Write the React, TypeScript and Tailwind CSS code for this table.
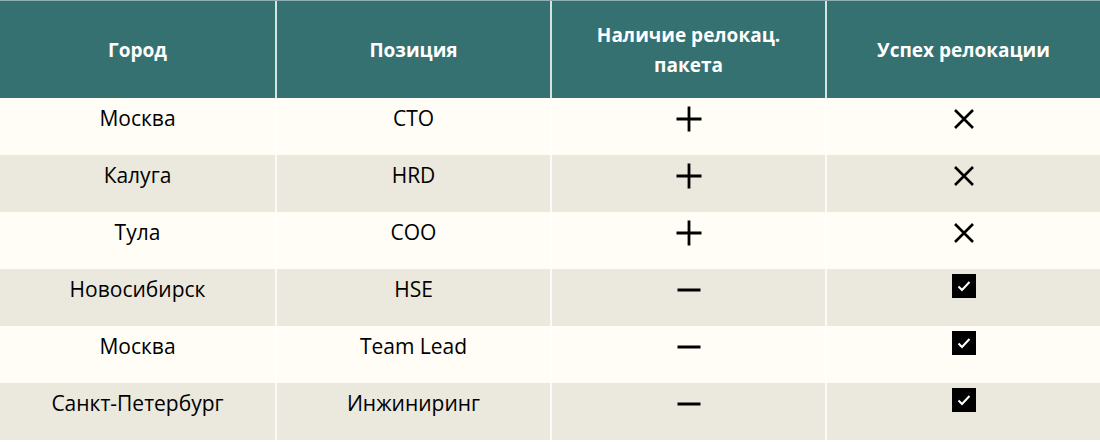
import type { ReactNode } from 'react'

type Mark = 'plus' | 'minus' | 'cross' | 'check'

const rows: { city: string; role: string; pack: Mark; ok: Mark }[] = [
  { city: 'Москва', role: 'CTO', pack: 'plus', ok: 'cross' },
  { city: 'Калуга', role: 'HRD', pack: 'plus', ok: 'cross' },
  { city: 'Тула', role: 'COO', pack: 'plus', ok: 'cross' },
  { city: 'Новосибирск', role: 'HSE', pack: 'minus', ok: 'check' },
  { city: 'Москва', role: 'Team Lead', pack: 'minus', ok: 'check' },
  { city: 'Санкт-Петербург', role: 'Инжиниринг', pack: 'minus', ok: 'check' },
]

function Icon({ mark }: { mark: Mark }) {
  if (mark === 'check') {
    return (
      <svg width="24" height="24" viewBox="0 0 24 24" className="mt-[5px]">
        <rect width="24" height="24" fill="#000" />
        <path d="M6.5 12.5l3.5 3.5 7.5-8" fill="none" stroke="#fff" strokeWidth="2" />
      </svg>
    )
  }
  return (
    <svg width="28" height="28" viewBox="0 0 28 28" className="mt-[7px]">
      {mark === 'plus' && <path d="M14 1.5v25M1.5 14h25" stroke="#000" strokeWidth="2.8" />}
      {mark === 'minus' && <path d="M2.5 14h23" stroke="#000" strokeWidth="3" />}
      {mark === 'cross' && <path d="M5 5l18 18M23 5L5 23" stroke="#000" strokeWidth="2.6" />}
    </svg>
  )
}

function Cell({ children, first }: { children: ReactNode; first?: boolean }) {
  return (
    <div className={`flex justify-center ${first ? '' : 'border-l-2 border-white/80'}`}>
      {children}
    </div>
  )
}

export default function App() {
  return (
    <div
      className="w-[1100px] h-[442px] bg-white text-black"
      style={{ fontFamily: '"Open Sans", "Noto Sans", sans-serif' }}
    >
      {/* Header */}
      <div className="grid h-[98px] grid-cols-4 border-t border-[#8fb0b0] bg-[#367172] text-[19px] font-bold leading-[30px] text-white">
        {['Город', 'Позиция', 'Наличие релокац. пакета', 'Успех релокации'].map((h, i) => (
          <Cell key={h} first={i === 0}>
            <div className="flex items-center px-4 text-center">
              {h === 'Наличие релокац. пакета' ? (
                <span>
                  Наличие релокац.
                  <br />
                  пакета
                </span>
              ) : (
                h
              )}
            </div>
          </Cell>
        ))}
      </div>

      {/* Body */}
      {rows.map((r, i) => (
        <div
          key={i}
          className={`grid h-[57px] grid-cols-4 text-[21px] leading-[30px] ${i % 2 === 0 ? 'bg-[#fffdf5]' : 'bg-[#ebe8de]'}`}
        >
          <Cell first>
            <span className="pt-[5px]">{r.city}</span>
          </Cell>
          <Cell>
            <span className="pt-[5px]">{r.role}</span>
          </Cell>
          <Cell>
            <Icon mark={r.pack} />
          </Cell>
          <Cell>
            <Icon mark={r.ok} />
          </Cell>
        </div>
      ))}
    </div>
  )
}
